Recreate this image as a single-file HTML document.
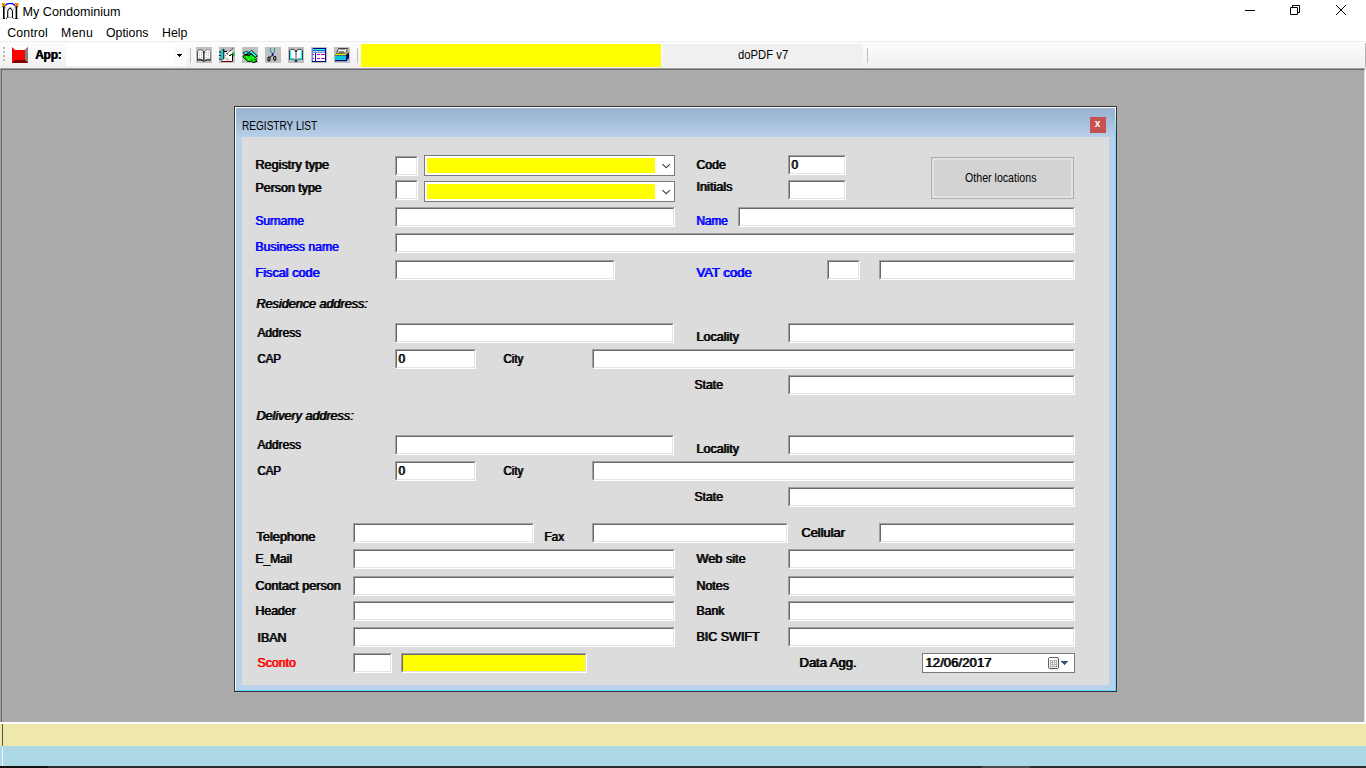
<!DOCTYPE html>
<html lang="en"><head><meta charset="utf-8"><title>My Condominium</title>
<style>
html,body{margin:0;padding:0;}
body{width:1366px;height:768px;overflow:hidden;background:#fff;position:relative;font-family:"Liberation Sans",sans-serif;font-size:12px;color:#000;}
div,label{position:absolute;box-sizing:border-box;display:block;}
span{white-space:nowrap;}
/* title + menu */
#wtitle{left:22.5px;top:4px;height:16px;line-height:16px;font-size:12.6px;}
.mi{top:25px;margin-left:-0.4px;height:16px;line-height:16px;font-size:12.3px;}
/* toolbar */
#tbline{left:0;top:41px;width:1366px;height:1px;background:#ededed;}
#tb{left:0;top:42px;width:1366px;height:26px;background:linear-gradient(#fdfdfd,#f0f0f0);}
#mdi{left:0;top:68px;width:1366px;height:654px;background:#ababab;border-top:1px solid #a0a0a0;border-left:1px solid #a0a0a0;border-right:1px solid #fff;}
#mdi2{left:1px;top:69px;width:1364px;height:653px;border-top:1px solid #696969;border-left:1px solid #696969;border-right:1px solid #e3e3e3;}
#tbr{left:1365px;top:43px;width:1px;height:24px;background:#b4b4b4;}
#sbw{left:0;top:722px;width:1366px;height:2px;background:#fff;}
#sb1{left:0;top:724px;width:1366px;height:22px;background:#eee8aa;}
#sb2{left:0;top:746px;width:1366px;height:20px;background:#add8e6;}
#sbk{left:0;top:766px;width:1366px;height:2px;background:#2a2d30;}
#sbk1{left:0;top:766px;width:48px;height:2px;background:#101214;}
#sbk2{left:982px;top:766px;width:48px;height:2px;background:#4a4d50;}
#sbl1{left:2px;top:724px;width:1px;height:22px;background:#555;}
#sbl2{left:2px;top:746px;width:1px;height:20px;background:#f4f4f4;}
.grip{left:3px;width:2px;height:2px;background:#b8b8b8;}
#appl{left:35px;top:47px;height:16px;line-height:16px;font-size:12px;font-weight:bold;letter-spacing:-0.3px;text-shadow:0.5px 0 0 #000;}
#appc{left:66px;top:43px;width:120px;height:23px;background:#fff;}
.sep{width:1px;top:48px;height:15px;background:#bdbdbd;}
.ic{top:47px;width:16px;height:16px;background:#c0c0c0;}
.ic svg{position:absolute;left:0;top:0;}
#yb{left:361px;top:44px;width:300px;height:23px;background:#ff0;}
#pdf{left:663px;top:44px;width:200px;height:23px;background:#f0f0f0;}
#pdf span{position:absolute;left:75px;top:3px;line-height:16px;font-size:12px;transform-origin:0 50%;transform:scaleX(0.94);}
/* dialog */
#dlg{left:234px;top:106px;width:883px;height:586px;background:#b9d1ea;border:1px solid #333;}
#dlgin{left:0;top:0;width:881px;height:584px;border-left:1px solid #fff;border-top:1px solid #fff;border-right:0;border-bottom:1px solid #63dbfb;background:linear-gradient(#99b4d1 0px,#9cb6d3 6px,#b9d1ea 30px,#b9d1ea 100%);}
#dlgr{left:880px;top:0;width:1px;height:583px;background:linear-gradient(#fff 0,#63dbfb 28px,#63dbfb 100%);}
#dtitle{left:7px;top:11px;height:16px;line-height:16px;font-size:12px;}
#dtitle span{display:inline-block;transform-origin:0 50%;transform:scaleX(0.84);}
#dclose{left:855px;top:10px;width:16px;height:16px;background:#c75050;color:#fff;font-weight:bold;font-size:10px;text-align:center;line-height:14px;}
#dclose span{position:relative;left:-0.5px;top:0px;}
#panel{left:7px;top:30px;width:867px;height:548px;background:#dcdcdc;}
#form{left:0;top:0;width:1366px;height:768px;}
.f{background:#fff;border:1px solid;border-color:#a0a0a0 #fff #fff #a0a0a0;}
.f::before{content:"";position:absolute;left:0;top:0;right:0;bottom:0;border:1px solid;border-color:#696969 #e3e3e3 #e3e3e3 #696969;}
.f.y{background:#ff0;}
.f span{position:absolute;left:2.2px;top:1px;line-height:16px;font-size:13px;text-shadow:1px 0 0 #000;transform-origin:0 50%;transform:scaleX(0.92);}
.l{height:16px;line-height:16px;font-size:13px;white-space:nowrap;transform-origin:0 50%;text-shadow:1px 0 0 currentColor;}
.l.bl{color:#00f;}
.l.rd{color:#f00;}
.l.it{font-style:italic;}
.cb{background:#fff;border:1px solid #7a7a7a;}
.cb i{position:absolute;left:2px;top:2px;width:228px;height:15px;background:#ff0;}
.cb svg{position:absolute;right:3.500px;top:6.500px;}
#btn{left:931px;top:157px;width:143px;height:42px;background:#d3d3d3;border:1px solid #adadad;box-shadow:inset 0 0 0 2px #e2e2e2;}
#btn span{position:absolute;left:33.3px;top:12px;line-height:16px;font-size:12.5px;transform-origin:0 50%;transform:scaleX(0.85);}
#dt{left:922px;top:653px;width:153px;height:20px;background:#fff;border:1px solid #7a7a7a;}
#dt span{position:absolute;left:2px;top:1px;line-height:16px;font-size:13px;letter-spacing:0.1px;text-shadow:1px 0 0 #000;}

</style></head>
<body>
<div id="wicon" style="left:2px;top:3px;width:17px;height:16px"><svg width="17" height="16" viewBox="0 0 17 16"><path d="M3.300 2.600C5 -0.300 11.300 -0.300 13 2.600" fill="none" stroke="#00f" stroke-width="1.300"/><path d="M1.800 3.200V15.800M14.400 3.200V15.800" fill="none" stroke="#000" stroke-width="1.600"/><path d="M0.300 3.700h3M12.900 3.700h3" stroke="#000" stroke-width="1" fill="none"/><path d="M0.800 15.500h2.400M13.200 15.500h2.400" stroke="#000" stroke-width="1" fill="none"/><path d="M5.700 15V8.300C5.700 6.800 7.200 5.800 8.100 5C9 5.800 10.500 6.800 10.500 8.300V15" fill="none" stroke="#000" stroke-width="1.100"/><path d="M6 14.300h4.200" stroke="#888" stroke-width="0.800" fill="none"/><path d="M3.300 4l2.200 3.800M12.900 4l-2.200 3.800" stroke="#999" stroke-width="0.600" fill="none"/><rect x="4" y="15" width="1" height="1" fill="#222"/><rect x="11.200" y="15" width="1" height="1" fill="#222"/><rect x="0" y="0" width="3.300" height="3.200" fill="#fc0"/><rect x="13" y="0" width="3.300" height="3.200" fill="#fc0"/><rect x="1" y="1" width="1.300" height="1.200" fill="#f00"/><rect x="14" y="1" width="1.300" height="1.200" fill="#f00"/><path d="M0 0h0.900v0.900h-0.900zM2.400 0h0.900v0.900h-0.900zM0 2.300h0.900v0.900h-0.900zM2.400 2.300h0.900v0.900h-0.900zM13 0h0.900v0.900h-0.900zM15.400 0h0.900v0.900h-0.900zM13 2.300h0.900v0.900h-0.900zM15.400 2.300h0.900v0.900h-0.900z" fill="#e60"/></svg></div>
<div id="wtitle">My Condominium</div>
<div id="wctl" style="left:1230px;top:0;width:136px;height:22px"><svg width="136" height="22" viewBox="0 0 136 22"><path d="M15 10.500h10" stroke="#000" stroke-width="1" fill="none"/><path d="M60.500 7.500h7v7h-7zM62.500 7.500v-2h7v7h-2" stroke="#000" stroke-width="1" fill="none"/><path d="M106 5l10 10M116 5l-10 10" stroke="#000" stroke-width="1" fill="none"/></svg></div>
<div class="mi" style="left:7.6px;letter-spacing:0.15px">Control</div>
<div class="mi" style="left:61.5px;letter-spacing:0.3px">Menu</div>
<div class="mi" style="left:106.4px">Options</div>
<div class="mi" style="left:162.5px">Help</div>
<div id="tbline"></div>
<div id="tb"></div><div id="tbr"></div>
<div id="mdi"></div><div id="mdi2"></div>
<div id="sbw"></div><div id="sb1"></div><div id="sb2"></div><div id="sbk"></div><div id="sbk1"></div><div id="sbk2"></div><div id="sbl1"></div><div id="sbl2"></div>
<div class="grip" style="top:47px"></div><div class="grip" style="top:51px"></div><div class="grip" style="top:55px"></div><div class="grip" style="top:59px"></div>
<div id="redic" style="left:12px;top:47px;width:16px;height:16px"><svg width="16" height="16" viewBox="0 0 16 16"><rect width="16" height="16" fill="#f00"/><path d="M0 0h16l-3 3h-10z" fill="#fff"/><path d="M16 0v16l-3-3V3z" fill="#808080"/><path d="M0 16h16l-3-3H3z" fill="#800000"/></svg></div>
<div id="appl">App:</div>
<div id="appc"><div style="left:108px;top:2px;width:11px;height:20px;background:#fafafa"></div><svg width="5" height="3" viewBox="0 0 5 3" shape-rendering="crispEdges" style="position:absolute;left:111px;top:11px"><path d="M0 0h5v1h-5zM1 1h3v1h-3zM2 2h1v1h-1z" fill="#000"/></svg></div>
<div class="sep" style="left:190px"></div>
<div class="ic" style="left:196px"><svg width="16" height="16" viewBox="0 0 16 16"><path d="M1.500 12.500V4.500C2.500 2.300 6 2 7.500 4.800V13.300C6 12.300 3.500 12 1.500 12.500Z" fill="#fff" stroke="#222" stroke-width="0.800"/><path d="M8.500 4.800C10 2 13.500 2.300 14.500 4.500V12.500C12.500 12 10 12.300 8.500 13.300Z" fill="#fff" stroke="#666" stroke-width="0.800"/><path d="M1 13.200C3.500 12.600 6 13 7.500 14.200H8.500C10 13 12.500 12.600 15 13.200" fill="none" stroke="#000" stroke-width="0.900"/><path d="M3 5.500h3M3 8h3M3 10.500h3M10 5.500h3M10 8h3M10 10.500h3" stroke="#aaa" stroke-width="0.900" stroke-dasharray="1.200 0.700" fill="none"/><path d="M7.300 5h1.400" stroke="#000" stroke-width="1.100"/></svg></div>
<div class="ic" style="left:219px"><svg width="16" height="16" viewBox="0 0 16 16"><path d="M4.500 4.500H13.500V14H2.500L4.500 12Z" fill="#fff"/><path d="M2.500 14.500H13.500" stroke="#800000" stroke-width="1"/><path d="M13.500 8V14" stroke="#000" stroke-width="1"/><path d="M4.500 4.500H8" stroke="#000" stroke-width="1.200"/><path d="M1.800 4.500L4.200 1.800V12L2.300 13.800Z" fill="#0ff" stroke="#000" stroke-width="0.400"/><path d="M4.800 2V12.500" stroke="#000" stroke-width="0.900"/><path d="M0 5h1.800M0 8.500h1.800M0 12h1.800" stroke="#000" stroke-width="1.100"/><path d="M13.800 1L8 6.800" stroke="#000" stroke-width="0.900" stroke-dasharray="1.500 0.800"/><path d="M7.500 6l1.500 1.500M10 8.500h2M11.500 7.500h2" stroke="#000" stroke-width="0.900"/><path d="M6 7.500v2M5.500 8.500h2M6.500 10.500l3 1.500M7 12.500l3.500 1" stroke="#9a9a9a" stroke-width="0.800"/><ellipse cx="14.700" cy="7.300" rx="1" ry="1.900" fill="#0c0"/><path d="M14 5.500C13.200 6.500 13.200 8.200 14 9.200" stroke="#000" stroke-width="0.700" fill="none"/></svg></div>
<div class="ic" style="left:242px"><svg width="16" height="16" viewBox="0 0 16 16"><path d="M1.200 5.800L4.800 4.200L6.800 6L3 7.800Z" fill="#0ff" stroke="#000" stroke-width="0.900"/><path d="M6.800 5.200L9.800 3.600L15.400 9L13.400 10.200L8.800 6.400L7.600 7Z" fill="#0ff" stroke="#000" stroke-width="0.900"/><path d="M10.500 15.300L11.500 16L15.300 14.800L14 13.500Z" fill="#909"/><path d="M1.200 9L4 7.800L7.200 8.600L9.200 7L13.200 10.200L14.600 11.600L13.600 13L15 14.200L11.200 15.600L9.400 14.200L6 14.600L1.200 10.200Z" fill="#0e0" stroke="#000" stroke-width="0.900"/><path d="M2 8.300L5 7.600L7.500 8.200L8.800 7" stroke="#000" stroke-width="1" fill="none"/><path d="M4 9.500l1.500 1M7.500 10l2 1.500M10.500 9.500l1.500 1.500M6 12l1.500 1" stroke="#9f9" stroke-width="0.800"/><path d="M3 10.500l1 0.800M9 12.500l1.200 0.800M12 12l0.800 0.800M6.500 9.500l0.800 0.600" stroke="#060" stroke-width="0.700"/><path d="M2.500 5.800l2-0.800M8.500 5l1.500-0.600M11.500 7.200l2 1.800" stroke="#cff" stroke-width="0.600"/></svg></div>
<div class="ic" style="left:265px"><svg width="16" height="16" viewBox="0 0 16 16"><path d="M5.400 1V4L7.400 6.800M9.600 1V4L8 6.800" stroke="#099" stroke-width="0.950" fill="none"/><path d="M6.800 6H8.500L8.200 8.800H7Z" fill="#008"/><path d="M7.100 8.500L5.200 10M8.200 8.500L8.800 9.200" stroke="#000" stroke-width="1"/><ellipse cx="4" cy="12.100" rx="1.150" ry="2" fill="none" stroke="#000" stroke-width="1.050" transform="rotate(6 4 12.100)"/><ellipse cx="9.800" cy="11.300" rx="1.200" ry="2.100" fill="none" stroke="#000" stroke-width="1.050"/><path d="M4.300 14.400l0.600-0.600" stroke="#777" stroke-width="0.700"/></svg></div>
<div class="ic" style="left:288px"><svg width="16" height="16" viewBox="0 0 16 16"><path d="M1.500 3.500C3.500 1.500 6.500 2 8 4.500C9.500 2 12.500 1.500 14.500 3.500V12.500C12.500 11.500 9.500 11.800 8 13.500C6.500 11.800 3.500 11.500 1.500 12.500Z" fill="#fff" stroke="#000" stroke-width="0.800"/><path d="M2.400 4V12M13.600 4V12" stroke="#0ff" stroke-width="1.100"/><path d="M2 12.600C4 12 6 12.500 7.300 14M14 12.600C12 12 10 12.500 8.700 14" stroke="#0cc" stroke-width="1" fill="none"/><path d="M8 4.500V14" stroke="#222" stroke-width="0.800"/><path d="M6.800 14.300h2.400" stroke="#000" stroke-width="1"/><path d="M7 4.300h2" stroke="#000" stroke-width="1"/></svg></div>
<div class="ic" style="left:311px"><svg width="16" height="16" viewBox="0 0 16 16" shape-rendering="crispEdges"><rect x="1" y="1" width="14" height="14" fill="#000080"/><rect x="2" y="6" width="12" height="8" fill="#fff"/><rect x="2" y="2" width="12" height="1" fill="#0ff"/><rect x="6" y="2" width="4" height="1" fill="#5f8"/><rect x="2" y="3" width="12" height="1" fill="#06f"/><rect x="2" y="4" width="12" height="1" fill="#c8c8d8"/><rect x="2" y="5" width="12" height="1" fill="#9090b8"/><rect x="4" y="6" width="1" height="8" fill="#00f"/><rect x="2" y="7" width="1" height="1" fill="#b0b"/><rect x="6" y="7" width="3" height="1" fill="#b0b"/><rect x="10" y="7" width="4" height="1" fill="#b0b"/><rect x="2" y="11" width="1" height="1" fill="#b0b"/><rect x="6" y="11" width="3" height="1" fill="#b0b"/><rect x="10" y="11" width="4" height="1" fill="#b0b"/><rect x="1" y="1" width="1" height="13" fill="#8088b0"/></svg></div>
<div class="ic" style="left:334px"><svg width="16" height="16" viewBox="0 0 16 16"><path d="M2.500 6.500L4.500 1.500H13.500L11.500 6.500Z" fill="#fff" stroke="#000" stroke-width="0.700"/><path d="M5.500 2.500h6" stroke="#999" stroke-width="1"/><path d="M4.500 5h6" stroke="#000" stroke-width="1"/><path d="M11.500 7L13.500 4.500L15 6.500V11L12 14.500V7Z" fill="#000080"/><path d="M1 7.500L1.500 6.800H11L13.500 4L14 4.800L11.500 8.500H1Z" fill="#ff0" stroke="#770" stroke-width="0.400"/><rect x="1" y="8.500" width="11" height="4.500" fill="#0ff"/><path d="M1 8.800h11" stroke="#000080" stroke-width="0.700"/><path d="M2 10.800h2.300M5.500 10.800h2.300M9 10.800h2.300" stroke="#099" stroke-width="1.800" stroke-linecap="round"/><path d="M2 10.800h2.300M5.500 10.800h2.300M9 10.800h2.300" stroke="#0ff" stroke-width="0.700" stroke-linecap="round"/><path d="M1 13.500h11.500" stroke="#000080" stroke-width="1.400"/><path d="M13 6l1 0.500" stroke="#ccc" stroke-width="0.800"/></svg></div>
<div class="sep" style="left:357px"></div>
<div id="yb"></div>
<div id="pdf"><span>doPDF v7</span></div>
<div class="sep" style="left:867px"></div>
<div id="dlg">
<div id="dlgin"></div>
<div id="dlgr"></div>
<div id="dtitle"><span>REGISTRY LIST</span></div>
<div id="dclose"><span>x</span></div>
<div id="panel"></div>
</div>
<div id="form">
<div class="f" style="left:395px;top:156px;width:23px;height:20px"></div>
<div class="f" style="left:395px;top:180px;width:23px;height:20px"></div>
<div class="f" style="left:788px;top:155px;width:58px;height:20px"><span>0</span></div>
<div class="f" style="left:788px;top:180px;width:58px;height:20px"></div>
<div class="f" style="left:395px;top:207px;width:280px;height:20px"></div>
<div class="f" style="left:738px;top:207px;width:337px;height:20px"></div>
<div class="f" style="left:395px;top:233px;width:680px;height:20px"></div>
<div class="f" style="left:395px;top:260px;width:220px;height:20px"></div>
<div class="f" style="left:827px;top:260px;width:33px;height:20px"></div>
<div class="f" style="left:879px;top:260px;width:196px;height:20px"></div>
<div class="f" style="left:395px;top:323px;width:279px;height:20px"></div>
<div class="f" style="left:788px;top:323px;width:287px;height:20px"></div>
<div class="f" style="left:395px;top:349px;width:81px;height:20px"><span>0</span></div>
<div class="f" style="left:592px;top:349px;width:483px;height:20px"></div>
<div class="f" style="left:788px;top:375px;width:287px;height:20px"></div>
<div class="f" style="left:395px;top:435px;width:279px;height:20px"></div>
<div class="f" style="left:788px;top:435px;width:287px;height:20px"></div>
<div class="f" style="left:395px;top:461px;width:81px;height:20px"><span>0</span></div>
<div class="f" style="left:592px;top:461px;width:483px;height:20px"></div>
<div class="f" style="left:788px;top:487px;width:287px;height:20px"></div>
<div class="f" style="left:353px;top:523px;width:181px;height:20px"></div>
<div class="f" style="left:592px;top:523px;width:196px;height:20px"></div>
<div class="f" style="left:879px;top:523px;width:196px;height:20px"></div>
<div class="f" style="left:353px;top:549px;width:322px;height:20px"></div>
<div class="f" style="left:788px;top:549px;width:287px;height:20px"></div>
<div class="f" style="left:353px;top:576px;width:322px;height:20px"></div>
<div class="f" style="left:788px;top:576px;width:287px;height:20px"></div>
<div class="f" style="left:353px;top:601px;width:322px;height:20px"></div>
<div class="f" style="left:788px;top:601px;width:287px;height:20px"></div>
<div class="f" style="left:353px;top:627px;width:322px;height:20px"></div>
<div class="f" style="left:788px;top:627px;width:287px;height:20px"></div>
<div class="f" style="left:353px;top:653px;width:39px;height:20px"></div>
<div class="f y" style="left:401px;top:653px;width:186px;height:20px"></div>
<label class="l" style="left:254.65px;top:157px;transform:scaleX(0.9704)">Registry type</label>
<label class="l" style="left:254.65px;top:180px;transform:scaleX(0.9549)">Person type</label>
<label class="l bl" style="left:255.0px;top:213px;transform:scaleX(0.9176)">Surname</label>
<label class="l bl" style="left:254.65px;top:239px;transform:scaleX(0.9385)">Business name</label>
<label class="l bl" style="left:254.65px;top:265px;transform:scaleX(0.9773)">Fiscal code</label>
<label class="l it" style="left:256px;top:296px;transform:scaleX(0.9689)">Residence address:</label>
<label class="l" style="left:257px;top:325px;transform:scaleX(0.9151)">Address</label>
<label class="l" style="left:256.6px;top:351px;transform:scaleX(0.8807)">CAP</label>
<label class="l it" style="left:256px;top:408px;transform:scaleX(0.9678)">Delivery address:</label>
<label class="l" style="left:257px;top:437px;transform:scaleX(0.9151)">Address</label>
<label class="l" style="left:256.6px;top:463px;transform:scaleX(0.8807)">CAP</label>
<label class="l" style="left:255.5px;top:529px;transform:scaleX(0.982)">Telephone</label>
<label class="l" style="left:254.7px;top:551px;transform:scaleX(0.9211)">E_Mail</label>
<label class="l" style="left:254.5px;top:578px;transform:scaleX(0.9677)">Contact person</label>
<label class="l" style="left:255.0px;top:603px;transform:scaleX(0.9469)">Header</label>
<label class="l" style="left:256.8px;top:630px;transform:scaleX(0.958)">IBAN</label>
<label class="l rd" style="left:256.7px;top:655px;transform:scaleX(0.9494)">Sconto</label>
<label class="l" style="left:695.7px;top:157px;transform:scaleX(0.9426)">Code</label>
<label class="l" style="left:696.2px;top:179px;transform:scaleX(0.9766)">Initials</label>
<label class="l bl" style="left:696.2px;top:213px;transform:scaleX(0.9055)">Name</label>
<label class="l bl" style="left:696.4px;top:265px;transform:scaleX(1.0054)">VAT code</label>
<label class="l" style="left:695.9px;top:329px;transform:scaleX(0.9659)">Locality</label>
<label class="l" style="left:695.9px;top:441px;transform:scaleX(0.9659)">Locality</label>
<label class="l" style="left:503.2px;top:351px;transform:scaleX(0.8868)">City</label>
<label class="l" style="left:503.2px;top:463px;transform:scaleX(0.8868)">City</label>
<label class="l" style="left:693.9px;top:377px;transform:scaleX(0.9392)">State</label>
<label class="l" style="left:693.9px;top:489px;transform:scaleX(0.9392)">State</label>
<label class="l" style="left:543.5px;top:529px;transform:scaleX(0.9055)">Fax</label>
<label class="l" style="left:801.3px;top:525px;transform:scaleX(0.9851)">Cellular</label>
<label class="l" style="left:695.6px;top:551px;transform:scaleX(0.9777)">Web site</label>
<label class="l" style="left:695.6px;top:578px;transform:scaleX(0.955)">Notes</label>
<label class="l" style="left:695.6px;top:603px;transform:scaleX(0.9432)">Bank</label>
<label class="l" style="left:695.6px;top:629px;transform:scaleX(0.9613)">BIC SWIFT</label>
<label class="l" style="left:798.5px;top:655px;transform:scaleX(1.0003)">Data Agg.</label>
<div class="cb" style="left:424px;top:155px;width:251px;height:21px"><i></i><svg width="9" height="6" viewBox="0 0 9 6"><path d="M0.400 1.200l3.800 3.500l3.800-3.500" fill="none" stroke="#444" stroke-width="1.150"/></svg></div>
<div class="cb" style="left:424px;top:181px;width:251px;height:21px"><i></i><svg width="9" height="6" viewBox="0 0 9 6"><path d="M0.400 1.200l3.800 3.500l3.800-3.500" fill="none" stroke="#444" stroke-width="1.150"/></svg></div>
<div id="btn"><span>Other locations</span></div>
<div id="dt"><span>12/06/2017</span><svg width="22" height="13" viewBox="0 0 22 13" style="position:absolute;left:125px;top:3px"><ellipse cx="6.500" cy="12.300" rx="5" ry="0.700" fill="#e4e4e4"/><rect x="0.500" y="0.500" width="10" height="11" rx="1.500" ry="1.500" fill="#f4f8fd" stroke="#6b5c5c" stroke-width="1"/><path d="M1 8h9v3h-9zM7 2h3v9h-3z" fill="#dbe7f7"/><path d="M1 1h6v2h-6z" fill="#fff"/><rect x="2" y="3" width="7" height="7" fill="#b2b6bf"/><path d="M3 4h1v1h-1zM5 4h1v1h-1zM7 4h1v1h-1zM3 6h1v1h-1zM5 6h1v1h-1zM7 6h1v1h-1zM3 8h1v1h-1zM5 8h1v1h-1zM7 8h1v1h-1z" fill="#fff"/><path d="M8 9h2v2h-2z" fill="#e8f0fa"/><path d="M8 9h1v1h-1z" fill="#6b5c5c"/><path d="M13 4h7v1h-7zM14 5h5v1h-5zM15 6h3v1h-3zM16 7h1v1h-1z" fill="#3c5179" shape-rendering="crispEdges"/></svg></div>
</div>
</body></html>
